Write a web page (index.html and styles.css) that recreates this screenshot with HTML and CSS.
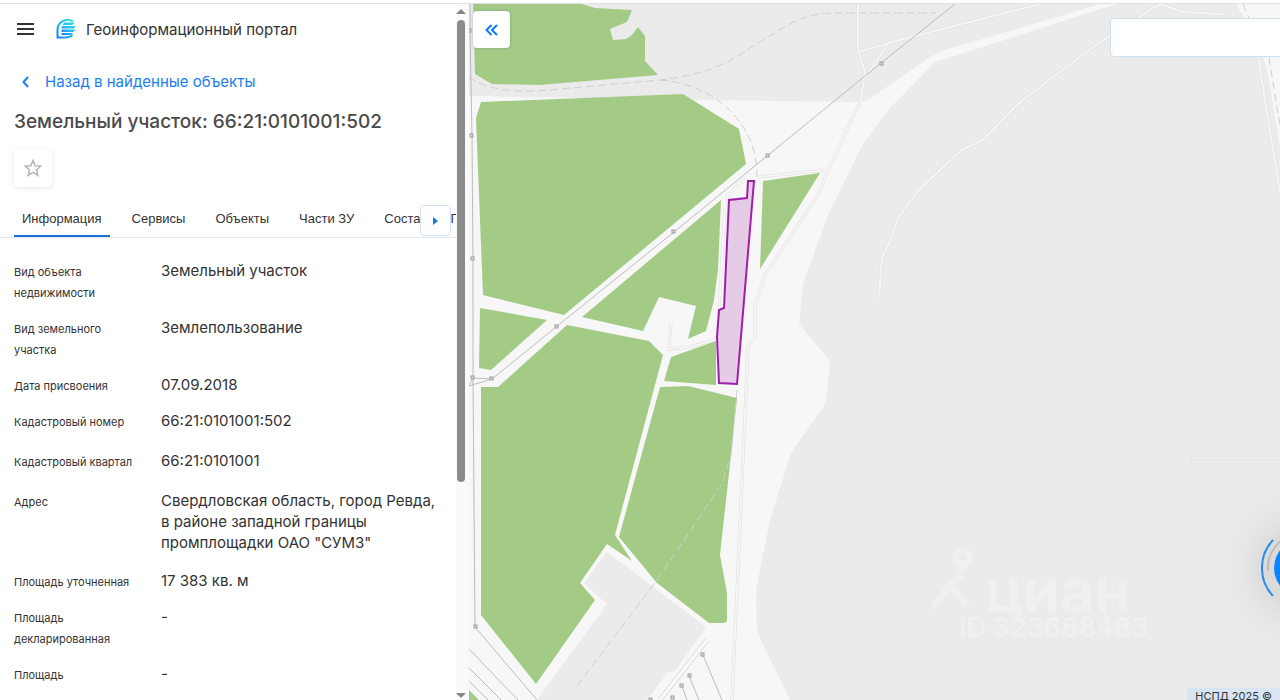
FILE: index.html
```html
<!DOCTYPE html>
<html lang="ru">
<head>
    <meta charset="UTF-8">
    <meta name="viewport" content="width=device-width, initial-scale=1.0">
    <title>Геоинформационный портал</title>
    <link rel="stylesheet" href="styles.css">
</head>
<body>
<div class="layout">
    <aside class="panel">
        <div class="panel-content">
            <header class="panel-header">
                <button type="button" class="menu-btn" aria-label="Меню">
                    <svg width="17" height="12" viewBox="0 0 17 12"><path d="M0 1h17M0 6h17M0 11h17" stroke="#333" stroke-width="2"/></svg>
                </button>
                <svg class="logo" width="20" height="20" viewBox="0 0 20 20">
                    <defs>
                        <linearGradient id="logo-fill" x1="1" y1="0" x2="0" y2="1">
                            <stop offset="0" stop-color="#2fe8c4"/>
                            <stop offset="0.5" stop-color="#25baf7"/>
                            <stop offset="1" stop-color="#1a7cf5"/>
                        </linearGradient>
                    </defs>
                    <path d="M17 2.500C14 0.500 10 0.500 7 2C3 4 1.500 7 1.500 11V18.500H9C12.500 18.500 15 17.500 16.500 16" fill="none" stroke="url(#logo-fill)" stroke-width="2"/>
                    <path d="M8.500 3.500H18.500C18 5 17 6 15 6H6.500ZM6 7H19.500C19 9 18 9.500 16 9.500H5.500ZM5.500 10.500H19C18.500 12.500 17.500 13 15.500 13H5.500ZM5.500 14H17C16 15.500 15 16 13 16H5.500Z" fill="url(#logo-fill)"/>
                </svg>
                <span class="portal-name">Геоинформационный портал</span>
            </header>

            <a href="#" class="back-link">
                <svg width="7" height="12" viewBox="0 0 7 12"><path d="M6 1L1.500 6L6 11" fill="none" stroke="currentColor" stroke-width="2"/></svg>
                Назад в найденные объекты
            </a>

            <h1>Земельный участок: 66:21:0101001:502</h1>

            <button type="button" class="favorite-btn" aria-label="В избранное">
                <svg width="18" height="18" viewBox="0 0 18 18"><path d="M9 1.500L11.200 6.700L16.800 7.100L12.500 10.800L13.900 16.300L9 13.300L4.100 16.300L5.500 10.800L1.200 7.100L6.800 6.700Z" fill="none" stroke="#b5b5b5" stroke-width="1.500"/></svg>
            </button>

            <nav class="tabs">
                <button type="button" class="tab active">Информация</button>
                <button type="button" class="tab">Сервисы</button>
                <button type="button" class="tab">Объекты</button>
                <button type="button" class="tab">Части ЗУ</button>
                <button type="button" class="tab">Соста</button>
                <button type="button" class="tab">П</button>
                <button type="button" class="tabs-next" aria-label="Следующие вкладки">
                    <svg width="6" height="8" viewBox="0 0 6 8"><path d="M0 0L5 4L0 8Z" fill="#0c7bf2"/></svg>
                </button>
            </nav>

            <dl class="info">
                <div class="info-row">
                    <dt>Вид объекта недвижимости</dt>
                    <dd>Земельный участок</dd>
                </div>
                <div class="info-row">
                    <dt>Вид земельного участка</dt>
                    <dd>Землепользование</dd>
                </div>
                <div class="info-row">
                    <dt>Дата присвоения</dt>
                    <dd>07.09.2018</dd>
                </div>
                <div class="info-row copyable">
                    <dt>Кадастровый номер</dt>
                    <dd>66:21:0101001:502</dd>
                </div>
                <div class="info-row copyable">
                    <dt>Кадастровый квартал</dt>
                    <dd>66:21:0101001</dd>
                </div>
                <div class="info-row copyable">
                    <dt>Адрес</dt>
                    <dd>Свердловская область, город Ревда, в районе западной границы промплощадки ОАО "СУМЗ"</dd>
                </div>
                <div class="info-row">
                    <dt>Площадь уточненная</dt>
                    <dd>17 383 кв. м</dd>
                </div>
                <div class="info-row">
                    <dt>Площадь декларированная</dt>
                    <dd>-</dd>
                </div>
                <div class="info-row">
                    <dt>Площадь</dt>
                    <dd>-</dd>
                </div>
            </dl>
        </div>
        <div class="scrollbar" aria-hidden="true">
            <span class="arrow-up"></span>
            <span class="thumb"></span>
            <span class="arrow-down"></span>
        </div>
    </aside>

    <main class="map">
        <svg class="map-canvas" viewBox="469 4 811 696" preserveAspectRatio="xMinYMin slice">
            <!-- застройка и промзоны -->
            <g fill="#ecebeb">
                <path d="M469 4H1100L1030 25L945 50L930 57L868 100L858 102L700 100L469 96Z"/>
                <path d="M1119 4L1100 9L1020 35L935 62L890 108L863 144L828 215L803 284L799 324L830 361L826 403L791 453L770 520L756 590L757 632L790 700H1280V148L1268 75L1250 4Z"/>
                <path d="M607 552L584 583L607 604L537 700H647L667 673L675 671L706 627Z"/>
            </g>
            <path d="M1236 4H1255L1268 20L1280 36V135L1266 57Z" fill="#f7f7f7"/>

            <!-- леса -->
            <g fill="#a4cb86">
                <path d="M473 4H582L595 8L632 10L627 22L610 29L613 40L626 39L632 35L638 27L645 36V61L658 75L540 85L492 84L475 74Z"/>
                <path d="M481 102L683 94L739 129L746 164L564 315L483 295L476 118Z"/>
                <path d="M721 200L718 270L714 300L706 331L688 339L696 306L659 297L643 331L582 317Z"/>
                <path d="M480 308L547 320L491 370L479 368Z"/>
                <path d="M763 181L820 173L760 269Z"/>
                <path d="M567 325L649 341L663 355L615 535L632 561L607 544L580 583L595 600L536 684L481 615V387H498Z"/>
                <path d="M671 357L716 341V385L664 381Z"/>
                <path d="M660 387L688 386L737 398L731 455L720 555L727 593V621L724 623H709L657 583L619 537Z"/>
                <path d="M469 690L479 700H469Z"/>
            </g>

            <!-- дороги: серая подложка и белая полоса сверху -->
            <g class="road-case">
                <path d="M858 4V50L865 72L861 100L828 170L818 195L765 275L755 305V338L748 346L743 460L732 700"/>
                <path d="M758 177L828 170M728 206V195L744 178"/>
                <path d="M725 206L719 309M721 338L690 347L669 349L671 322"/>
                <path d="M1160 4L1100 42L1020 102L983 140L961 150L918 191L898 218L889 243L882 258L879 297"/>
                <path d="M1040 4L900 40L858 52M889 42L877 60L865 78M1160 4L1183 12L1222 14M1258 57L1280 192"/>
            </g>
            <g class="road">
                <path d="M858 4V50L865 72L861 100L828 170L818 195L765 275L755 305V338L748 346L743 460L732 700"/>
                <path d="M758 177L828 170M728 206V195L744 178"/>
                <path d="M725 206L719 309M721 338L690 347L669 349L671 322"/>
                <path d="M1160 4L1100 42L1020 102L983 140L961 150L918 191L898 218L889 243L882 258L879 297"/>
                <path d="M1040 4L900 40L858 52M889 42L877 60L865 78M1160 4L1183 12L1222 14M1258 57L1280 192"/>
            </g>
            <path d="M707 640L660 700" stroke="#dcdcdc" stroke-width="5"/>
            <path d="M707 640L660 700" stroke="#fafafa" stroke-width="3"/>
            <path d="M1280 456H1191V460H1280" fill="none" stroke="#e3e2e2"/>

            <!-- железная дорога -->
            <g class="railway">
                <path d="M469 77C490 92 520 93 560 89L660 80C700 75 723 67 750 48C790 25 797 13 840 13H936"/>
                <path d="M660 80C710 83 758 120 757 177"/>
                <path d="M737 390L731 455L722 484L657 580L577 686"/>
                <path d="M1243 4L1250 20L1268 52L1280 125"/>
            </g>

            <!-- ЛЭП -->
            <g class="power-line">
                <path d="M470 4V30L472 136L473 259V378L475 627L537 700M473 378L492 379M469 386L473 378M469 386L492 379"/>
                <path d="M955 4L881 63L767 156L674 232L556 327L492 379"/>
                <path d="M469 649L518 700M469 668L501 700M469 681L488 700M703 655L722 700M689 676L699 700M682 686L687 700"/>
            </g>
            <g class="pole">
                <rect x="468" y="29" width="3" height="3"/>
                <rect x="470" y="134" width="3" height="3"/>
                <rect x="471" y="257" width="3" height="3"/>
                <rect x="471" y="376" width="3" height="3"/>
                <rect x="490" y="377" width="3" height="3"/>
                <rect x="474" y="625" width="3" height="3"/>
                <rect x="880" y="62" width="3" height="3"/>
                <rect x="766" y="154" width="3" height="3"/>
                <rect x="672" y="230" width="3" height="3"/>
                <rect x="555" y="325" width="3" height="3"/>
                <rect x="701" y="653" width="3" height="3"/>
                <rect x="688" y="674" width="3" height="3"/>
                <rect x="680" y="684" width="3" height="3"/>
                <rect x="671" y="696" width="3" height="3"/>
                <rect x="649" y="698" width="3" height="3"/>
            </g>

            <!-- выбранный участок -->
            <path class="parcel" d="M748 181H754L737 384L719 383L717 337L719 310L724 308L729 200L747 198Z"/>

            <!-- водяной знак -->
            <g class="watermark">
                <path d="M933 608L950 585L967 605M950 585L962 575" fill="none" stroke="#f1f0f0" stroke-width="7"/>
                <path d="M962 573C955 565 952 561 952 557A10 9 0 0 1 973 557C973 561 969 565 962 573ZM962 553A4 4 0 1 0 962 561A4 4 0 1 0 962 553Z" fill-rule="evenodd"/>
                <text x="985" y="612" font-size="60">циан</text>
                <text x="959" y="637" font-size="27">ID 323688483</text>
            </g>
        </svg>

        <button type="button" class="collapse-btn" aria-label="Свернуть панель">
            <svg width="13" height="12" viewBox="0 0 13 12"><path d="M6.500 1L1.500 6L6.500 11M12 1L7 6L12 11" fill="none" stroke="#0c7bf2" stroke-width="2"/></svg>
        </button>
        <input type="text" class="map-search" aria-label="Поиск">
        <button type="button" class="assistant" aria-label="Помощник">
            <svg width="84" height="84" viewBox="0 0 84 84">
                <path d="M12 14A41 41 0 0 0 12 70" fill="none" stroke="#2a8cf0" stroke-width="2"/>
                <path d="M24 12A35 35 0 0 0 7 45" fill="none" stroke="#bdbdbd" stroke-width="2"/>
                <circle cx="42" cy="42" r="29" fill="#0a84ff"/>
            </svg>
        </button>
        <div class="copyright">НСПД 2025 ©</div>
    </main>
</div>
</body>
</html>
```
FILE: styles.css
```css
* {
    margin: 0;
    padding: 0;
    box-sizing: border-box;
}

body {
    font-family: Inter, 'Noto Sans', sans-serif;
    font-size: 15px;
    line-height: 21px;
    color: #333;
    background: white;
    height: 100vh;
    padding-top: 3px;
    overflow: hidden;
}

button {
    border: none;
    background: none;
    font: inherit;
    color: inherit;
    cursor: pointer;
}

svg {
    display: block;
}

.layout {
    display: flex;
    height: 100%;
    border-top: 1px solid #e2e2e2;
}

/* Левая панель */
.panel {
    display: flex;
    width: 469px;
    flex-shrink: 0;
}

.panel-content {
    flex: 1;
    min-width: 0;
    overflow: hidden;
}

.panel-header {
    display: flex;
    align-items: center;
    height: 50px;
    padding-left: 17px;
}

.logo {
    margin: 0 10px 0 22px;
}

.back-link {
    display: flex;
    align-items: center;
    gap: 16px;
    margin-top: 17px;
    padding-left: 22px;
    color: #1a7ef0;
    text-decoration: none;
}

h1 {
    margin: 18px 0 0 14px;
    font-size: 19px;
    line-height: 24px;
    font-weight: 500;
    color: #4a4a4a;
}

.favorite-btn {
    display: flex;
    align-items: center;
    justify-content: center;
    width: 38px;
    height: 38px;
    margin: 15px 0 0 14px;
    border-radius: 4px;
    background: white;
    box-shadow: 0 1px 5px rgba(0, 0, 0, 0.1);
}

.tabs {
    position: relative;
    display: flex;
    gap: 14px;
    margin-top: 12px;
    padding-left: 14px;
    border-bottom: 1px solid #dfe5ec;
    overflow: hidden;
}

.tab {
    flex-shrink: 0;
    height: 38px;
    padding: 2px 8px 0;
    font-family: 'Liberation Sans', Arial, sans-serif;
    font-size: 13px;
    border-bottom: 2px solid transparent;
}

.tab.active {
    border-bottom-color: #1a72d8;
}

.tabs-next {
    position: absolute;
    top: 6px;
    right: 5px;
    display: flex;
    align-items: center;
    justify-content: center;
    width: 31px;
    height: 31px;
    border: 1px solid #cfe2f7;
    border-radius: 4px;
    background: white;
}

.info {
    display: flex;
    flex-direction: column;
    gap: 13px;
    margin-top: 22px;
    padding-left: 14px;
}

.info-row {
    display: flex;
    align-items: baseline;
    gap: 16px;
}

.info-row.copyable {
    padding-bottom: 4px;
}

dt {
    width: 131px;
    flex-shrink: 0;
    font-size: 11px;
}

dd {
    width: 280px;
}

.scrollbar {
    display: flex;
    flex-direction: column;
    align-items: center;
    width: 13px;
    padding: 5px 3px 2px 0;
    background: #fafafa;
}

.arrow-up,
.arrow-down {
    border: 5px solid transparent;
}

.arrow-up {
    border-top: none;
    border-bottom-color: #858585;
}

.arrow-down {
    margin-top: auto;
    border-bottom: none;
    border-top-color: #858585;
}

.thumb {
    width: 8px;
    height: 67%;
    margin-top: 6px;
    border-radius: 4px;
    background: #8b8b8b;
}

/* Карта */
.map {
    position: relative;
    flex: 1;
    min-width: 0;
    overflow: hidden;
    background: #f7f7f7;
}

.map-canvas {
    width: 100%;
    height: 100%;
}

.road-case path {
    fill: none;
    stroke: #dfdede;
    stroke-width: 3;
}

.road path {
    fill: none;
    stroke: #f6f6f6;
    stroke-width: 2;
}

.railway path {
    fill: none;
    stroke: #d0cfcf;
    stroke-width: 1;
    stroke-dasharray: 8 4;
}

.power-line path {
    fill: none;
    stroke: #bdbbbd;
    stroke-width: 1;
}

.pole rect {
    fill: #ddd;
    stroke: #9c9c9c;
    stroke-width: 1;
}

.parcel {
    fill: #e5cbe6;
    stroke: #a01fa8;
    stroke-width: 2;
}

.watermark {
    fill: #f1f0f0;
    font-family: Inter, 'Noto Sans', sans-serif;
    font-weight: 600;
}

.collapse-btn {
    position: absolute;
    top: 7px;
    left: 4px;
    display: flex;
    align-items: center;
    justify-content: center;
    width: 37px;
    height: 37px;
    border-radius: 4px;
    background: white;
    box-shadow: 0 0 3px rgba(0, 60, 120, 0.3);
}

.map-search {
    position: absolute;
    top: 14px;
    right: -10px;
    width: 180px;
    height: 39px;
    padding: 0 12px;
    border: 1px solid #cfe0f0;
    border-radius: 4px;
    background: white;
    font: inherit;
}

.assistant {
    position: absolute;
    right: -65px;
    bottom: 90px;
    border-radius: 50%;
    background: #dcdbdb;
    box-shadow: 0 0 50px rgba(0, 0, 0, 0.15);
}

.copyright {
    position: absolute;
    right: 0;
    bottom: 0;
    height: 12px;
    padding: 0 8px;
    font-size: 11px;
    line-height: 17px;
    background: #d8e6f4;
    overflow: hidden;
}
```
